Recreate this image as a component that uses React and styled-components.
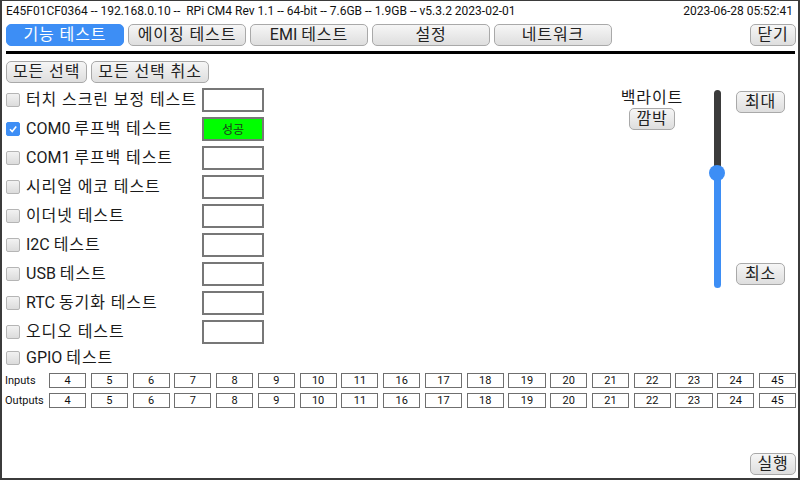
import React from "react";
import styled, { createGlobalStyle } from "styled-components";

const Global = createGlobalStyle`
  html, body { margin: 0; padding: 0; background: #3b3b3b; }
  * { box-sizing: border-box; }
  body { font-family: Roboto, "Noto Sans CJK KR", sans-serif; }
`;

const Frame = styled.div`
  width: 800px;
  height: 480px;
  padding: 1px 2px 2px 2px;
  background: #3b3b3b;
`;

const Panel = styled.div`
  width: 100%;
  height: 100%;
  background: #fff;
  display: flex;
  flex-direction: column;
  padding: 0 2px 3px 4px;
  color: #1a1a1a;
`;

const Header = styled.div`
  height: 20px;
  display: flex;
  align-items: center;
  justify-content: space-between;
  font-size: 12px;
  padding-right: 3px;
  white-space: pre;
  color: #111;
`;

const TabBar = styled.div`
  margin-top: 3px;
  height: 22px;
  display: flex;
  gap: 4px;
`;

const Btn = styled.button`
  font-family: Roboto, "Noto Sans CJK KR", sans-serif;
  font-size: 16px;
  line-height: 1;
  height: 22px;
  padding: 0 6px;
  border: 1px solid #a9a9a9;
  border-radius: 5px;
  background: linear-gradient(#f6f6f6, #dedede);
  color: #222;
  display: flex;
  align-items: center;
  justify-content: center;
  white-space: pre;
  cursor: pointer;
`;

const Tab = styled(Btn)`
  width: 118px;
  ${(p) =>
    p.$active &&
    `
    background: #3d8ef5;
    border-color: #3d8ef5;
    color: #fff;
  `}
`;

const Hangul = styled.span`
  letter-spacing: 0.9px;
`;

const Spacer = styled.div`
  flex: 1;
`;

const Rule = styled.div`
  margin-top: 5px;
  height: 3px;
  margin-right: 1px;
  background: #000;
`;

const SelectBar = styled.div`
  margin-top: 7px;
  display: flex;
  gap: 4px;
`;

const Main = styled.div`
  display: flex;
  margin-top: 2px;
`;

const TestList = styled.div`
  display: flex;
  flex-direction: column;
`;

const TestRow = styled.div`
  height: 29px;
  display: flex;
  align-items: center;
`;

const Check = styled.span`
  width: 14px;
  height: 14px;
  border: 1px solid #b5b5b5;
  border-radius: 2px;
  background: ${(p) => (p.$on ? "#3d8ef5" : "linear-gradient(#f2f2f2, #dcdcdc)")};
  border-color: ${(p) => (p.$on ? "#3d8ef5" : "#b5b5b5")};
  display: flex;
  align-items: center;
  justify-content: center;
  flex: none;
`;

const Label = styled.span`
  margin-left: 6px;
  width: 176px;
  font-size: 16px;
  line-height: 1;
  white-space: pre;
  color: #1a1a1a;
`;

const Result = styled.div`
  width: 62px;
  height: 24px;
  border: 2px solid #777;
  background: ${(p) => (p.$ok ? "#00ff00" : "#fff")};
  font-size: 12px;
  display: flex;
  align-items: center;
  justify-content: center;
  color: #1d3a1d;
`;

const GpioRow = styled.div`
  height: 24px;
  display: flex;
  align-items: center;
`;

const RightArea = styled.div`
  flex: 1;
  display: flex;
  padding-top: 5px;
  padding-right: 11px;
`;

const Backlight = styled.div`
  width: 72px;
  margin-left: auto;
  display: flex;
  flex-direction: column;
  align-items: center;
  font-size: 16px;
  line-height: 1;
  gap: 2px;
  white-space: pre;
`;

const SmallBtn = styled(Btn)`
  width: 46px;
  padding: 0;
`;

const SliderWrap = styled.div`
  margin-left: 21px;
  width: 16px;
  height: 198px;
  position: relative;
  display: flex;
  justify-content: center;
`;

const Track = styled.div`
  width: 7px;
  height: 100%;
  border-radius: 4px;
  background: linear-gradient(
    to top,
    #3d8ef5 0%,
    #3d8ef5 var(--v),
    #3b3b3b var(--v),
    #3b3b3b 100%
  );
`;

const Thumb = styled.div`
  position: absolute;
  left: 0;
  width: 16px;
  height: 16px;
  border-radius: 50%;
  background: #3d8ef5;
`;

const LimitCol = styled.div`
  margin-left: 11px;
  height: 194px;
  margin-top: 1px;
  display: flex;
  flex-direction: column;
  justify-content: space-between;
`;

const LimitBtn = styled(Btn)`
  width: 49px;
  padding: 0;
`;

const PinRow = styled.div`
  display: flex;
  align-items: center;
  margin-top: ${(p) => p.$mt}px;
  height: 14px;
`;

const PinLabel = styled.span`
  width: 44px;
  font-size: 11px;
  margin-left: -1px;
  color: #111;
`;

const Pins = styled.div`
  flex: 1;
  display: flex;
  gap: 4.7px;
`;

const Pin = styled.div`
  flex: 1;
  height: 15px;
  border: 1.5px solid #6f6f6f;
  font-size: 11px;
  display: flex;
  align-items: center;
  justify-content: center;
  color: #111;
`;

const Footer = styled.div`
  margin-top: auto;
  display: flex;
  justify-content: flex-end;
`;

function Ko({ text }) {
  const parts = text.split(/([\uAC00-\uD7A3]+(?:\s[\uAC00-\uD7A3]+)*)/);
  return (
    <>
      {parts.map((p, i) =>
        /[\uAC00-\uD7A3]/.test(p) ? <Hangul key={i}>{p}</Hangul> : p
      )}
    </>
  );
}

const tests = [
  { name: "터치 스크린 보정 테스트" },
  { name: "COM0 루프백 테스트", on: true, ok: true },
  { name: "COM1 루프백 테스트" },
  { name: "시리얼 에코 테스트" },
  { name: "이더넷 테스트" },
  { name: "I2C 테스트" },
  { name: "USB 테스트" },
  { name: "RTC 동기화 테스트" },
  { name: "오디오 테스트" },
];

const pins = [4, 5, 6, 7, 8, 9, 10, 11, 16, 17, 18, 19, 20, 21, 22, 23, 24, 45];

const tabs = ["기능 테스트", "에이징 테스트", "EMI 테스트", "설정", "네트워크"];

const Tick = () => (
  <svg width="10" height="10" viewBox="0 0 10 10">
    <path d="M2 5.3 L4.2 7.5 L8.2 2.5" fill="none" stroke="#fff" strokeWidth="1.6" />
  </svg>
);

export default function App() {
  const level = 58;
  return (
    <Frame>
      <Global />
      <Panel>
        <Header>
          <span>E45F01CF0364 -- 192.168.0.10 --  RPi CM4 Rev 1.1 -- 64-bit -- 7.6GB -- 1.9GB -- v5.3.2 2023-02-01</span>
          <span>2023-06-28 05:52:41</span>
        </Header>
        <TabBar>
          {tabs.map((t, i) => (
            <Tab key={t} $active={i === 0}>
              <Ko text={t} />
            </Tab>
          ))}
          <Spacer />
          <SmallBtn>
            <Ko text="닫기" />
          </SmallBtn>
        </TabBar>
        <Rule />
        <SelectBar>
          <Btn>
            <Ko text="모든 선택" />
          </Btn>
          <Btn>
            <Ko text="모든 선택 취소" />
          </Btn>
        </SelectBar>
        <Main>
          <TestList>
            {tests.map((t) => (
              <TestRow key={t.name}>
                <Check $on={t.on}>{t.on && <Tick />}</Check>
                <Label>
                  <Ko text={t.name} />
                </Label>
                <Result $ok={t.ok}>{t.ok ? "성공" : ""}</Result>
              </TestRow>
            ))}
            <GpioRow>
              <Check />
              <Label>
                <Ko text="GPIO 테스트" />
              </Label>
            </GpioRow>
          </TestList>
          <RightArea>
            <Backlight>
              <span>
                <Ko text="백라이트" />
              </span>
              <SmallBtn>
                <Ko text="깜박" />
              </SmallBtn>
            </Backlight>
            <SliderWrap>
              <Track style={{ "--v": `${level}%` }} />
              <Thumb style={{ top: `calc(${100 - level}% - 8px)` }} />
            </SliderWrap>
            <LimitCol>
              <LimitBtn>
                <Ko text="최대" />
              </LimitBtn>
              <LimitBtn>
                <Ko text="최소" />
              </LimitBtn>
            </LimitCol>
          </RightArea>
        </Main>
        <PinRow $mt={3}>
          <PinLabel>Inputs</PinLabel>
          <Pins>
            {pins.map((p) => (
              <Pin key={p}>{p}</Pin>
            ))}
          </Pins>
        </PinRow>
        <PinRow $mt={6}>
          <PinLabel>Outputs</PinLabel>
          <Pins>
            {pins.map((p) => (
              <Pin key={p}>{p}</Pin>
            ))}
          </Pins>
        </PinRow>
        <Footer>
          <SmallBtn>
            <Ko text="실행" />
          </SmallBtn>
        </Footer>
      </Panel>
    </Frame>
  );
}
